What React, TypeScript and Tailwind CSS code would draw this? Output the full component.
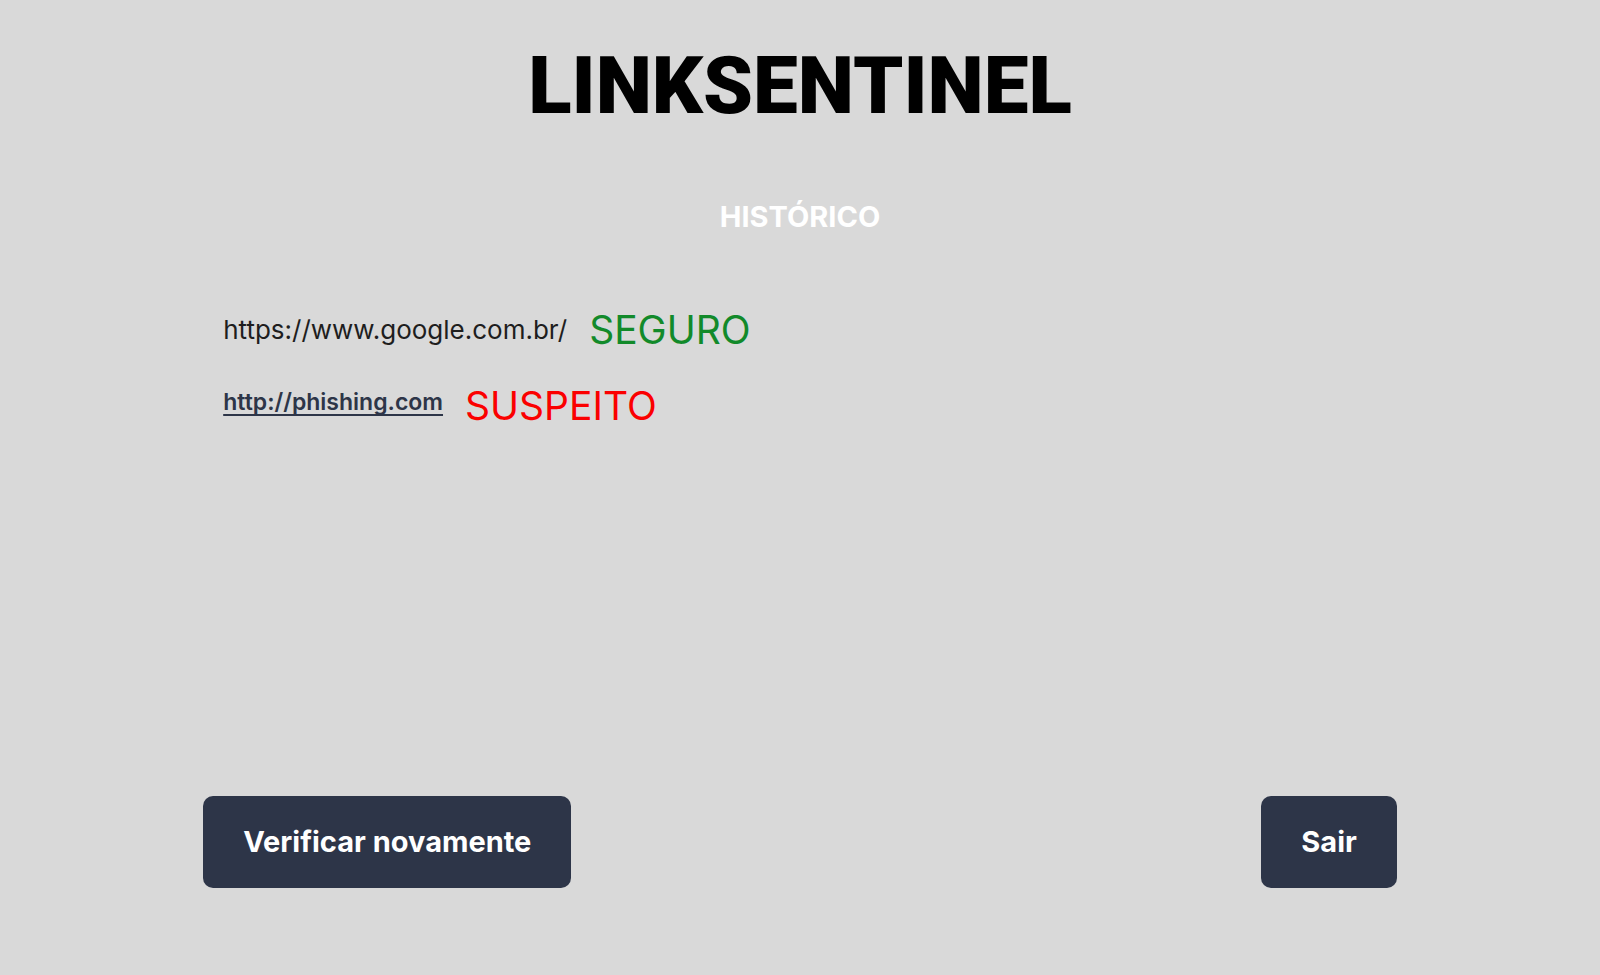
const history = [
  { url: "https://www.google.com.br/", safe: true },
  { url: "http://phishing.com", safe: false },
];

const buttonClass =
  "cursor-pointer rounded-[10px] bg-[#2d3548] px-10 py-7 text-[29px] leading-9 font-bold text-white";

export default function App() {
  return (
    <div className="flex min-h-screen flex-col bg-[#d9d9d9] px-[12.7%] pt-[42px] pb-[87px] font-['Inter',sans-serif]">
      <header className="text-center">
        <h1 className="font-['Roboto',sans-serif] text-[80px] leading-[88px] font-black text-black">
          LINKSENTINEL
        </h1>
      </header>
      <main className="flex flex-1 flex-col">
        <h2 className="mt-[69px] text-center text-[29px] leading-9 font-bold text-white">
          HISTÓRICO
        </h2>
        <ul className="mt-[71px] flex flex-col gap-7 px-5">
          {history.map(({ url, safe }) =>
            safe ? (
              <li key={url} className="flex items-center gap-[22px]">
                <span className="text-[26px] leading-8 text-[#1e1e1e]">{url}</span>
                <span className="text-[39px] leading-12 text-[#128a2a]">SEGURO</span>
              </li>
            ) : (
              <li key={url} className="flex items-start gap-[22px]">
                <a
                  href={url}
                  className="pt-1 text-[23px] leading-8 font-semibold text-[#2d3548] underline decoration-2 underline-offset-4 [text-decoration-skip-ink:none]"
                >
                  {url}
                </a>
                <span className="text-[39px] leading-12 text-[#fb0000]">SUSPEITO</span>
              </li>
            ),
          )}
        </ul>
      </main>
      <footer className="flex justify-between">
        <button type="button" className={buttonClass}>
          Verificar novamente
        </button>
        <button type="button" className={buttonClass}>
          Sair
        </button>
      </footer>
    </div>
  );
}
